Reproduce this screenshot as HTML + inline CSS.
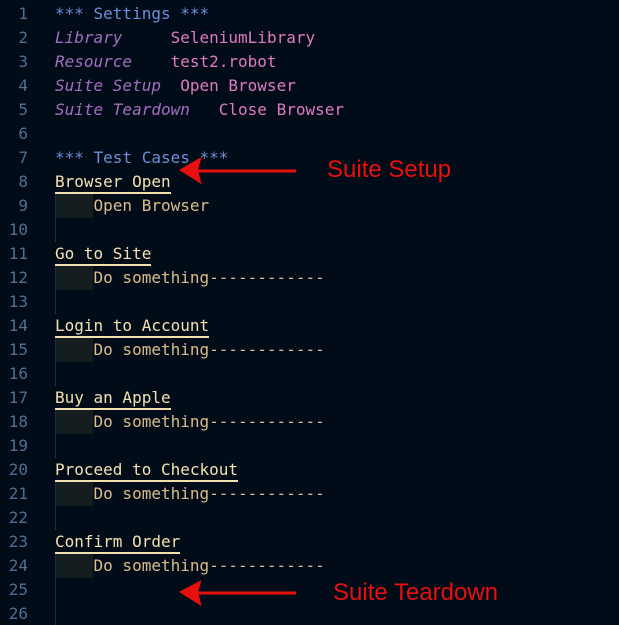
<!DOCTYPE html>
<html><head><style>
html,body{margin:0;width:619px;height:625px;overflow:hidden}
body{background:#020b18;position:relative;font-family:"DejaVu Sans Mono",monospace;font-size:16px}
.l{position:absolute;left:0;height:24px;line-height:24px;white-space:pre;width:619px}
.n{position:absolute;right:591px;color:#4f7090;text-align:right}
.c{position:absolute;left:55px}
.h{color:#6e8fd8}.k{color:#a36fc0;font-style:italic}.v{color:#e07ac0}
.t{color:#f3e2b0;border-bottom:2px solid #f3e2b0;line-height:21px;display:inline-block}
.kw{color:#dcbb8c}
.ind{position:absolute;left:55px;top:0;width:38px;height:24px;background:#141e1e}
.g{position:absolute;left:55px;top:0;width:1px;height:24px;background:#173050}
.lab{position:absolute;font-family:"Liberation Sans",sans-serif;font-size:24px;color:#e8100e}
</style></head><body>
<div class="l" style="top:2px"><span class="n">1</span><span class="c"><span class="h">*** Settings ***</span></span></div>
<div class="l" style="top:26px"><span class="n">2</span><span class="c"><span class="k">Library</span>     <span class="v">SeleniumLibrary</span></span></div>
<div class="l" style="top:50px"><span class="n">3</span><span class="c"><span class="k">Resource</span>    <span class="v">test2.robot</span></span></div>
<div class="l" style="top:74px"><span class="n">4</span><span class="c"><span class="k">Suite Setup</span>  <span class="v">Open Browser</span></span></div>
<div class="l" style="top:98px"><span class="n">5</span><span class="c"><span class="k">Suite Teardown</span>   <span class="v">Close Browser</span></span></div>
<div class="l" style="top:122px"><span class="n">6</span></div>
<div class="l" style="top:146px"><span class="n">7</span><span class="c"><span class="h">*** Test Cases ***</span></span></div>
<div class="l" style="top:170px"><span class="n">8</span><span class="c"><span class="t">Browser Open</span></span></div>
<div class="l" style="top:194px"><span class="n">9</span><div class="ind"></div><div class="g"></div><span class="c">    <span class="kw">Open Browser</span></span></div>
<div class="l" style="top:218px"><span class="n">10</span><div class="g"></div></div>
<div class="l" style="top:242px"><span class="n">11</span><span class="c"><span class="t">Go to Site</span></span></div>
<div class="l" style="top:266px"><span class="n">12</span><div class="ind"></div><div class="g"></div><span class="c">    <span class="kw">Do something------------</span></span></div>
<div class="l" style="top:290px"><span class="n">13</span><div class="g"></div></div>
<div class="l" style="top:314px"><span class="n">14</span><span class="c"><span class="t">Login to Account</span></span></div>
<div class="l" style="top:338px"><span class="n">15</span><div class="ind"></div><div class="g"></div><span class="c">    <span class="kw">Do something------------</span></span></div>
<div class="l" style="top:362px"><span class="n">16</span><div class="g"></div></div>
<div class="l" style="top:386px"><span class="n">17</span><span class="c"><span class="t">Buy an Apple</span></span></div>
<div class="l" style="top:410px"><span class="n">18</span><div class="ind"></div><div class="g"></div><span class="c">    <span class="kw">Do something------------</span></span></div>
<div class="l" style="top:434px"><span class="n">19</span><div class="g"></div></div>
<div class="l" style="top:458px"><span class="n">20</span><span class="c"><span class="t">Proceed to Checkout</span></span></div>
<div class="l" style="top:482px"><span class="n">21</span><div class="ind"></div><div class="g"></div><span class="c">    <span class="kw">Do something------------</span></span></div>
<div class="l" style="top:506px"><span class="n">22</span><div class="g"></div></div>
<div class="l" style="top:530px"><span class="n">23</span><span class="c"><span class="t">Confirm Order</span></span></div>
<div class="l" style="top:554px"><span class="n">24</span><div class="ind"></div><div class="g"></div><span class="c">    <span class="kw">Do something------------</span></span></div>
<div class="l" style="top:578px"><span class="n">25</span><div class="g"></div></div>
<div class="l" style="top:602px;height:23px;overflow:hidden"><span class="n">26</span><div class="g" style="height:23px"></div></div>
<svg style="position:absolute;left:0;top:0" width="619" height="625">
<g fill="#e8100e" stroke="#e8100e">
<line x1="196" y1="171" x2="296" y2="171" stroke-width="3"/>
<polygon points="181,170 200,159 197,170 200,182" stroke-width="2"/>
<line x1="196" y1="593" x2="296" y2="593" stroke-width="3"/>
<polygon points="181,592 200,582 197,592 200,604" stroke-width="2"/>
</g></svg>
<div class="lab" style="left:327px;top:156px">Suite Setup</div>
<div class="lab" style="left:333px;top:579px">Suite Teardown</div>
</body></html>
